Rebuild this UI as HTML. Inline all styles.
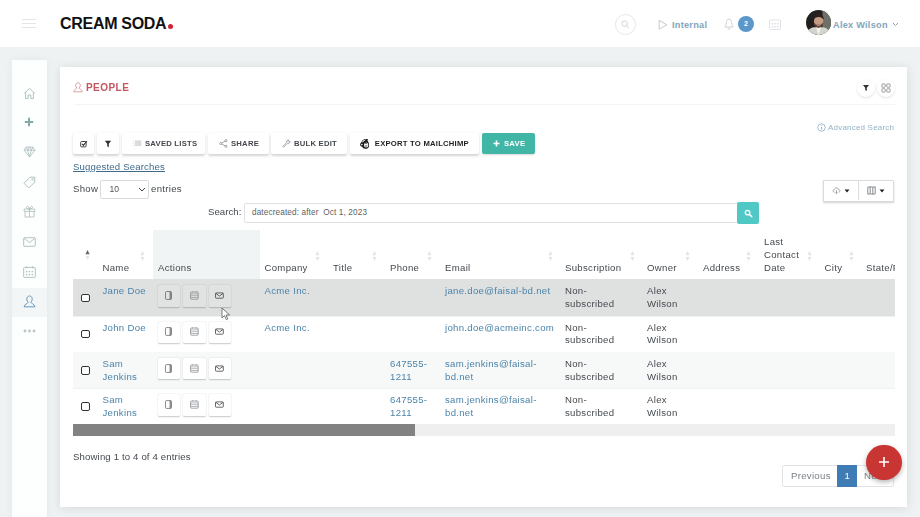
<!DOCTYPE html>
<html lang="en">
<head>
<meta charset="utf-8">
<title>Cream Soda - People</title>
<style>
*{box-sizing:border-box;margin:0;padding:0}
html,body{width:920px;height:517px;overflow:hidden}
body{transform:translateZ(0);background:#eff2f2;font-family:"Liberation Sans",sans-serif;color:#3a3f45;position:relative;font-size:10px}
.abs{position:absolute}
#hdr{position:absolute;left:0;top:0;width:920px;height:47px;background:#fff}
#logo{position:absolute;left:60px;top:13.7px;font-weight:bold;font-size:16px;line-height:20px;color:#111;letter-spacing:-0.3px;white-space:nowrap}
#logo i{display:inline-block;width:5px;height:5px;border-radius:50%;background:#d0213a;margin-left:1.6px}
.hm{position:absolute;left:22px;width:14px;height:1px;background:#e3e6e6}
.htxt{position:absolute;color:#84a5bc;font-size:9.2px;line-height:14px;font-weight:bold;white-space:nowrap;letter-spacing:0.25px}
#side{position:absolute;left:12px;top:60px;width:35px;height:460px;background:#fdfefe;box-shadow:0 0 9px rgba(0,0,0,0.05)}
#side .act{position:absolute;left:0;top:228px;width:35px;height:29px;background:#f2f6f6}
#panel{position:absolute;left:60px;top:67px;width:847px;height:440px;background:#fff;box-shadow:0 1px 10px rgba(0,0,0,0.10)}
#ttl{position:absolute;left:86px;top:80.6px;font-size:10px;line-height:14px;font-weight:bold;color:#c4565f;letter-spacing:0.45px}
#hr{position:absolute;left:75px;top:104px;width:820px;height:1px;background:#f3f5f5}
.btn{position:absolute;top:133px;height:21px;background:#fff;border-radius:2px;box-shadow:0 1.5px 2.5px rgba(0,0,0,0.17);font-size:7.7px;font-weight:bold;color:#44484d;line-height:21px;white-space:nowrap;letter-spacing:0.22px}
.btn span{position:absolute;top:0}
.cbtn{position:absolute;width:18px;height:18px;border-radius:50%;background:#fff;box-shadow:0 1px 2.5px rgba(0,0,0,0.12)}
.t{position:absolute;white-space:nowrap;font-size:9.6px;line-height:12.8px;letter-spacing:0.3px;color:#454a4f}
.lnk{color:#4b84aa}
.ab{position:absolute;width:22.6px;height:21.6px;background:#fff;border-radius:1.5px;box-shadow:0 0.5px 1.5px rgba(0,0,0,0.22)}
.cb{position:absolute;left:81px;width:8.5px;height:8.5px;border:1px solid #333;border-radius:2px;background:#fff}
</style>
</head>
<body>

<div id="hdr">
  <div class="hm" style="top:19px"></div><div class="hm" style="top:23px"></div><div class="hm" style="top:27px"></div>
  <div id="logo">CREAM SODA<i></i></div>
  <div class="abs" style="left:615px;top:13.6px;width:21px;height:21px;border:1px solid #e3e6e8;border-radius:50%"></div>
  <svg class="abs" style="left:620px;top:18.8px" width="11" height="11" viewBox="0 0 11 11"><circle cx="4.6" cy="4.6" r="2.8" fill="none" stroke="#d0d5d8" stroke-width="1"/><path d="M6.7 6.7L9 9" stroke="#d0d5d8" stroke-width="1"/></svg>
  <svg class="abs" style="left:658px;top:18.6px" width="10" height="11.5" viewBox="0 0 9 10"><path d="M1 1L8 5L1 9Z" fill="none" stroke="#c3c9cc" stroke-width="0.9" stroke-linejoin="round"/></svg>
  <div class="htxt" style="left:672px;top:17.5px">Internal</div>
  <svg class="abs" style="left:724px;top:18px" width="10" height="13" viewBox="0 0 10 13"><path d="M5 1.2C3 1.2 2.3 3 2.3 4.6C2.3 7 1.2 8.3 1 9H9C8.8 8.3 7.7 7 7.7 4.6C7.7 3 7 1.2 5 1.2Z" fill="none" stroke="#c6cccf" stroke-width="0.9"/><path d="M3.8 10.3C4 11.3 6 11.3 6.2 10.3" fill="none" stroke="#c6cccf" stroke-width="0.9"/></svg>
  <div class="abs" style="left:738px;top:15.6px;width:16px;height:16px;border-radius:50%;background:#5b97c9;color:#fff;font-size:7px;font-weight:bold;text-align:center;line-height:15px">2</div>
  <svg class="abs" style="left:769px;top:19px" width="12" height="11" viewBox="0 0 12 11"><rect x="0.5" y="1" width="11" height="9.5" rx="1" fill="none" stroke="#dce0e3" stroke-width="0.9"/><g fill="#dce0e3"><rect x="2.5" y="4" width="1.5" height="1.5"/><rect x="5.2" y="4" width="1.5" height="1.5"/><rect x="8" y="4" width="1.5" height="1.5"/><rect x="2.5" y="7" width="1.5" height="1.5"/><rect x="5.2" y="7" width="1.5" height="1.5"/><rect x="8" y="7" width="1.5" height="1.5"/></g></svg>
  <svg class="abs" style="left:805.5px;top:10.4px" width="25" height="25" viewBox="0 0 25 25"><defs><clipPath id="av"><circle cx="12.5" cy="12.5" r="12.5"/></clipPath><filter id="bl" x="-10%" y="-10%" width="120%" height="120%"><feGaussianBlur stdDeviation="0.7"/></filter></defs><g clip-path="url(#av)"><rect width="25" height="25" fill="#211f1f"/><g filter="url(#bl)"><rect x="16.5" y="0" width="9" height="25" fill="#6e7169"/><path d="M0 25C1 20 4 18 8 17.2L17 17.2C21 18 24 20 25 25Z" fill="#d4d4ce"/><path d="M10.2 17.5L12.6 25L15 17.5Z" fill="#f6f4ee"/><ellipse cx="12.6" cy="11.6" rx="4.7" ry="6" fill="#c69c86"/><path d="M7.6 9.5C6.6 2.6 18.6 2.6 17.6 9.5C16 6 9.2 6 7.6 9.5Z" fill="#2f211b"/><path d="M7.9 12C8.2 19.6 17 19.6 17.3 12C16.4 15.4 8.8 15.4 7.9 12Z" fill="#674434"/><path d="M10.6 14.6C11.8 15.6 13.4 15.6 14.6 14.6" stroke="#e8d8cc" stroke-width="0.7" fill="none"/></g></g></svg>
  <div class="htxt" style="left:833px;top:17.5px">Alex Wilson</div>
  <svg class="abs" style="left:892px;top:22px" width="7" height="5" viewBox="0 0 7 5"><path d="M1 1L3.5 3.5L6 1" fill="none" stroke="#8aa3b5" stroke-width="1"/></svg>
</div>


<div id="side"><div class="act"></div></div>
<div id="panel"></div>
<svg class="abs" style="left:23px;top:87px" width="13" height="13" viewBox="0 0 13 13"><path d="M1.2 6.4L6.5 1.4L11.8 6.4M2.6 5.4V11.6H5.2V8H7.8V11.6H10.4V5.4" fill="none" stroke="#a9bcbc" stroke-width="0.9" stroke-linejoin="round"/></svg>
<svg class="abs" style="left:24px;top:117px" width="10" height="10" viewBox="0 0 10 10"><path d="M5 0.8V9.2M0.8 5H9.2" stroke="#86aaa6" stroke-width="2"/></svg>
<svg class="abs" style="left:23px;top:146px" width="13" height="12" viewBox="0 0 13 12"><path d="M3.2 1H9.8L12 4.2L6.5 11L1 4.2ZM1 4.2H12M4.6 4.2L6.5 11L8.4 4.2M3.2 1L4.6 4.2L6.5 1L8.4 4.2L9.8 1" fill="none" stroke="#a9bcbc" stroke-width="0.8" stroke-linejoin="round"/></svg>
<svg class="abs" style="left:23px;top:176px" width="13" height="13" viewBox="0 0 13 13"><path d="M7 1.2H11.8V6L5.8 12L1 7.2Z" fill="none" stroke="#a9bcbc" stroke-width="0.9" stroke-linejoin="round"/><circle cx="9.6" cy="3.4" r="0.9" fill="none" stroke="#a9bcbc" stroke-width="0.7"/></svg>
<svg class="abs" style="left:23px;top:205px" width="13" height="13" viewBox="0 0 13 13"><path d="M1.2 4H11.8V6.4H1.2ZM2 6.4V12H11V6.4M6.5 4V12M6.5 4C4.5 4 3 3 3.6 1.8C4.4 0.6 6.2 2 6.5 4C6.8 2 8.6 0.6 9.4 1.8C10 3 8.5 4 6.5 4" fill="none" stroke="#a9bcbc" stroke-width="0.8" stroke-linejoin="round"/></svg>
<svg class="abs" style="left:23px;top:237px" width="13" height="10" viewBox="0 0 13 10"><rect x="0.7" y="0.7" width="11.6" height="8.6" rx="0.8" fill="none" stroke="#a9bcbc" stroke-width="0.9"/><path d="M1 1.2L6.5 5.6L12 1.2" fill="none" stroke="#a9bcbc" stroke-width="0.9"/></svg>
<svg class="abs" style="left:23px;top:266px" width="13" height="12" viewBox="0 0 13 12"><rect x="0.7" y="1.4" width="11.6" height="10" rx="0.8" fill="none" stroke="#a9bcbc" stroke-width="0.9"/><path d="M3.4 0.4V2.4M9.6 0.4V2.4" stroke="#a9bcbc" stroke-width="0.9"/><g fill="#a9bcbc"><rect x="3" y="5" width="1.3" height="1.3"/><rect x="5.8" y="5" width="1.3" height="1.3"/><rect x="8.6" y="5" width="1.3" height="1.3"/><rect x="3" y="8" width="1.3" height="1.3"/><rect x="5.8" y="8" width="1.3" height="1.3"/><rect x="8.6" y="8" width="1.3" height="1.3"/></g></svg>
<svg class="abs" style="left:23px;top:295px" width="13" height="13" viewBox="0 0 13 13"><path d="M6.5 1C4.6 1 3.8 2.5 3.8 4C3.8 5.5 4.5 6.7 5.3 7.3C5.1 8.3 1.5 8.8 1.1 11.8H11.9C11.5 8.8 7.9 8.3 7.7 7.3C8.5 6.7 9.2 5.5 9.2 4C9.2 2.5 8.4 1 6.5 1Z" fill="none" stroke="#5b90b8" stroke-width="0.9" stroke-linejoin="round"/></svg>
<svg class="abs" style="left:23px;top:329px" width="13" height="4" viewBox="0 0 13 4"><g fill="#b9c6c6"><circle cx="2" cy="2" r="1.4"/><circle cx="6.5" cy="2" r="1.4"/><circle cx="11" cy="2" r="1.4"/></g></svg>
<div id="ttl">PEOPLE</div>
<div id="hr"></div>

<!-- title icon -->
<svg class="abs" style="left:73px;top:82px" width="10" height="11" viewBox="0 0 10 11"><path d="M5 0.8C3.4 0.8 2.7 2 2.7 3.3C2.7 4.6 3.3 5.6 4 6.1C3.8 6.9 1 7.4 0.7 9.8H9.3C9 7.4 6.2 6.9 6 6.1C6.7 5.6 7.3 4.6 7.3 3.3C7.3 2 6.6 0.8 5 0.8Z" fill="none" stroke="#d58a91" stroke-width="0.8"/></svg>

<!-- top-right circular buttons -->
<div class="cbtn" style="left:857px;top:79px"></div>
<svg class="abs" style="left:862px;top:84px" width="8" height="8" viewBox="0 0 8 8"><path d="M1 1H7L4.8 3.8V7L3.2 6V3.8Z" fill="#2e3236"/></svg>
<div class="cbtn" style="left:877px;top:79px"></div>
<svg class="abs" style="left:881px;top:83px" width="10" height="10" viewBox="0 0 10 10"><g fill="none" stroke="#74797d" stroke-width="0.7"><rect x="0.9" y="0.9" width="3.3" height="3.3" rx="0.5"/><rect x="5.8" y="0.9" width="3.3" height="3.3" rx="0.5"/><rect x="0.9" y="5.8" width="3.3" height="3.3" rx="0.5"/><rect x="5.8" y="5.8" width="3.3" height="3.3" rx="0.5"/></g></svg>

<!-- advanced search -->
<svg class="abs" style="left:817px;top:123px" width="9" height="9" viewBox="0 0 9 9"><circle cx="4.5" cy="4.5" r="3.7" fill="none" stroke="#8fb0c4" stroke-width="0.8"/><path d="M4.5 2.3V2.9M4.5 3.8V6.6" stroke="#8fb0c4" stroke-width="0.9"/></svg>
<div class="t" style="left:828px;top:122px;font-size:8px;line-height:12px;letter-spacing:0.2px;color:#93b2c5">Advanced Search</div>

<!-- toolbar -->
<div class="btn" style="left:73px;width:21px"><svg class="abs" style="left:7px;top:6.5px" width="8" height="8" viewBox="0 0 8 8"><rect x="0.7" y="1.5" width="5.4" height="5.4" rx="0.9" fill="none" stroke="#2f3337" stroke-width="0.9"/><path d="M2.1 3.9L3.4 5.3L7 1" fill="none" stroke="#2f3337" stroke-width="1.1"/></svg></div>
<div class="btn" style="left:97px;width:22px"><svg class="abs" style="left:7px;top:7px" width="8" height="8" viewBox="0 0 8 8"><path d="M0.8 0.8H7.2L4.8 3.8V7.2L3.2 6.2V3.8Z" fill="#2e3236"/></svg></div>
<div class="btn" style="left:122px;width:83px"><svg class="abs" style="left:11px;top:7px" width="9" height="7" viewBox="0 0 9 7"><g fill="#d9dcde"><rect x="0" y="0.6" width="0.9" height="0.9"/><rect x="0" y="2.8" width="0.9" height="0.9"/><rect x="0" y="5" width="0.9" height="0.9"/><rect x="1.8" y="0.4" width="6.4" height="5.7"/></g></svg><span style="left:23px">SAVED LISTS</span></div>
<div class="btn" style="left:208px;width:61px"><svg class="abs" style="left:11px;top:6px" width="9" height="9" viewBox="0 0 9 9"><g fill="none" stroke="#8d9296" stroke-width="0.8"><circle cx="7" cy="1.7" r="1.1"/><circle cx="1.8" cy="4.5" r="1.1"/><circle cx="7" cy="7.3" r="1.1"/><path d="M2.8 4L6 2.2M2.8 5L6 6.8"/></g></svg><span style="left:23px">SHARE</span></div>
<div class="btn" style="left:271px;width:76px"><svg class="abs" style="left:11px;top:6px" width="9" height="9" viewBox="0 0 9 9"><path d="M1 7.2L4.4 3.8C3.9 2.2 5.2 0.7 7 1L5.7 2.3L6.7 3.3L8 2C8.4 3.8 6.8 5.1 5.2 4.6L1.8 8C1.4 8.4 0.6 7.6 1 7.2Z" fill="none" stroke="#8d9296" stroke-width="0.75" stroke-linejoin="round"/></svg><span style="left:23px">BULK EDIT</span></div>
<div class="btn" style="left:350px;width:129px;color:#1d2023"><svg class="abs" style="left:9.3px;top:5px" width="11.5" height="11.5" viewBox="0 0 11 11.5"><path d="M2.2 4.2C3 1.6 6 0.4 8.6 1.2C8.8 1.9 8.4 2.4 8 2.6C9.6 4 10 6.4 9.8 8C9.6 10 7.8 11 6 10.8C4.6 10.7 3.4 10 3 8.8C1.6 8.8 0.6 7.6 0.9 6.3C1 5.4 1.5 4.6 2.2 4.2Z" fill="#17191b"/><ellipse cx="6.9" cy="7" rx="2.2" ry="2.6" fill="#fff"/><path d="M2.9 3.9C3.6 2.4 5.4 1.6 7 1.8C5.6 2.4 4.2 3.4 3.6 4.6Z" fill="#fff"/><circle cx="2.6" cy="6.6" r="0.8" fill="#fff"/><path d="M5.6 5.6C6.4 5.2 7.4 5.3 8 5.8" fill="none" stroke="#17191b" stroke-width="0.6"/><path d="M5.8 7.4H8M6 8.4C6.6 8.9 7.4 8.9 7.9 8.4" fill="none" stroke="#17191b" stroke-width="0.5"/></svg><span style="left:24.8px">EXPORT TO MAILCHIMP</span></div>
<div class="btn" style="left:482px;width:53px;background:#41b6a6;color:#fff;box-shadow:0 1px 2px rgba(0,0,0,0.15)"><svg class="abs" style="left:11px;top:7px" width="7" height="7" viewBox="0 0 7 7"><path d="M3.5 0.5V6.5M0.5 3.5H6.5" stroke="#fff" stroke-width="1.6"/></svg><span style="left:22px">SAVE</span></div>

<!-- suggested / show -->
<div class="t" style="left:73px;top:161px;letter-spacing:0.16px;color:#3f6b8c;text-decoration:underline">Suggested Searches</div>
<div class="t" style="left:73px;top:182.5px">Show</div>
<div class="abs" style="left:100px;top:180px;width:49px;height:19px;border:1px solid #d9dcdd;border-radius:2px;background:#fff"></div>
<div class="t" style="left:109.5px;top:183.3px;font-size:8.6px;letter-spacing:0;color:#555">10</div>
<svg class="abs" style="left:138px;top:187px" width="8" height="5" viewBox="0 0 8 5"><path d="M1 1L4 4L7 1" fill="none" stroke="#444" stroke-width="1"/></svg>
<div class="t" style="left:151px;top:182.5px">entries</div>

<!-- right dropdown buttons -->
<div class="abs" style="left:823px;top:180px;width:71px;height:21.5px;background:#fff;border-radius:1px;border:1px solid #d9dbdc;box-shadow:0 1px 2px rgba(0,0,0,0.18)"></div>
<div class="abs" style="left:858px;top:181px;width:1px;height:19px;background:#dcdfe1"></div>
<svg class="abs" style="left:832px;top:186px" width="9" height="9" viewBox="0 0 9 9"><path d="M2.6 6.2C0.6 6.2 0.6 3.6 2.4 3.6C2.6 1.4 6.2 1.4 6.4 3.4C8.4 3.4 8.4 6.2 6.6 6.2" fill="none" stroke="#8d9296" stroke-width="0.8"/><path d="M4.5 4.2V7.6M3.4 6.6L4.5 7.7L5.6 6.6" fill="none" stroke="#8d9296" stroke-width="0.8"/></svg>
<svg class="abs" style="left:844px;top:189px" width="6" height="4" viewBox="0 0 6 4"><path d="M0.5 0.5H5.5L3 3.5Z" fill="#222"/></svg>
<svg class="abs" style="left:867px;top:186px" width="9" height="9" viewBox="0 0 9 9"><path d="M0.8 1.2L3.2 0.8L5.8 1.2L8.2 0.8V7.8L5.8 8.2L3.2 7.8L0.8 8.2ZM3.2 0.8V7.8M5.8 1.2V8.2" fill="none" stroke="#6b7074" stroke-width="0.8"/></svg>
<svg class="abs" style="left:879px;top:189px" width="6" height="4" viewBox="0 0 6 4"><path d="M0.5 0.5H5.5L3 3.5Z" fill="#222"/></svg>

<!-- search -->
<div class="t" style="left:208px;top:206px;letter-spacing:0.05px">Search:</div>
<div class="abs" style="left:244px;top:203px;width:494px;height:20px;border:1px solid #dfe1e2;border-radius:2px 0 0 2px;background:#fff"></div>
<div class="t" style="left:252px;top:207px;font-size:8.2px;letter-spacing:0.13px;color:#5a5f64">datecreated: after &nbsp;Oct 1, 2023</div>
<div class="abs" style="left:737px;top:202px;width:22px;height:22px;background:#50c8c5;border-radius:2px"></div>
<svg class="abs" style="left:744px;top:209px" width="9" height="9" viewBox="0 0 9 9"><circle cx="3.6" cy="3.6" r="2.3" fill="none" stroke="#fff" stroke-width="1.3"/><path d="M5.4 5.4L7.8 7.8" stroke="#fff" stroke-width="1.5" stroke-linecap="round"/></svg>


<!-- table -->
<div class="abs" style="left:153px;top:230px;width:107px;height:49.30000000000001px;background:#f1f4f4"></div>
<div class="abs" style="left:73px;top:279.3px;width:822px;height:36.25px;background:#dfe1e1"></div>
<div class="abs" style="left:73px;top:315.55px;width:822px;height:1px;background:#f0f1f1"></div>
<div class="abs" style="left:73px;top:351.8px;width:822px;height:36.25px;background:#f7f8f8"></div>
<div class="abs" style="left:73px;top:388.05px;width:822px;height:1px;background:#f0f1f1"></div>
<div class="t" style="left:102.5px;top:261.57px">Name</div>
<div class="t" style="left:158px;top:261.57px">Actions</div>
<div class="t" style="left:264.5px;top:261.57px">Company</div>
<div class="t" style="left:333px;top:261.57px">Title</div>
<div class="t" style="left:390px;top:261.57px">Phone</div>
<div class="t" style="left:445px;top:261.57px">Email</div>
<div class="t" style="left:565px;top:261.57px">Subscription</div>
<div class="t" style="left:647px;top:261.57px">Owner</div>
<div class="t" style="left:703px;top:261.57px">Address</div>
<div class="t" style="left:824.5px;top:261.57px">City</div>
<div class="t" style="left:764px;top:235.97px">Last<br>Contact<br>Date</div>
<div class="abs" style="left:866px;top:261.57px;width:29px;height:12.8px;overflow:hidden"><div class="t" style="left:0;top:0">State/Province</div></div>
<svg class="abs" style="left:85px;top:249.3px" width="5" height="12" viewBox="0 0 5 12"><path d="M2.5 1L4.6 5.2H0.4Z" fill="#63676a"/><path d="M2.5 11L4.4 7H0.6Z" fill="#e4e6e6"/></svg>
<svg class="abs" style="left:140.2px;top:249.6px" width="5" height="12" viewBox="0 0 5 12"><path d="M2.5 1L4.6 5.2H0.4Z" fill="#e2e5e5"/><path d="M2.5 11L4.4 7H0.6Z" fill="#e2e5e5"/></svg>
<svg class="abs" style="left:315px;top:249.6px" width="5" height="12" viewBox="0 0 5 12"><path d="M2.5 1L4.6 5.2H0.4Z" fill="#e2e5e5"/><path d="M2.5 11L4.4 7H0.6Z" fill="#e2e5e5"/></svg>
<svg class="abs" style="left:372px;top:249.6px" width="5" height="12" viewBox="0 0 5 12"><path d="M2.5 1L4.6 5.2H0.4Z" fill="#e2e5e5"/><path d="M2.5 11L4.4 7H0.6Z" fill="#e2e5e5"/></svg>
<svg class="abs" style="left:427px;top:249.6px" width="5" height="12" viewBox="0 0 5 12"><path d="M2.5 1L4.6 5.2H0.4Z" fill="#e2e5e5"/><path d="M2.5 11L4.4 7H0.6Z" fill="#e2e5e5"/></svg>
<svg class="abs" style="left:547.5px;top:249.6px" width="5" height="12" viewBox="0 0 5 12"><path d="M2.5 1L4.6 5.2H0.4Z" fill="#e2e5e5"/><path d="M2.5 11L4.4 7H0.6Z" fill="#e2e5e5"/></svg>
<svg class="abs" style="left:629.5px;top:249.6px" width="5" height="12" viewBox="0 0 5 12"><path d="M2.5 1L4.6 5.2H0.4Z" fill="#e2e5e5"/><path d="M2.5 11L4.4 7H0.6Z" fill="#e2e5e5"/></svg>
<svg class="abs" style="left:684.5px;top:249.6px" width="5" height="12" viewBox="0 0 5 12"><path d="M2.5 1L4.6 5.2H0.4Z" fill="#e2e5e5"/><path d="M2.5 11L4.4 7H0.6Z" fill="#e2e5e5"/></svg>
<svg class="abs" style="left:745.5px;top:249.6px" width="5" height="12" viewBox="0 0 5 12"><path d="M2.5 1L4.6 5.2H0.4Z" fill="#e2e5e5"/><path d="M2.5 11L4.4 7H0.6Z" fill="#e2e5e5"/></svg>
<svg class="abs" style="left:806.5px;top:249.6px" width="5" height="12" viewBox="0 0 5 12"><path d="M2.5 1L4.6 5.2H0.4Z" fill="#e2e5e5"/><path d="M2.5 11L4.4 7H0.6Z" fill="#e2e5e5"/></svg>
<svg class="abs" style="left:848.5px;top:249.6px" width="5" height="12" viewBox="0 0 5 12"><path d="M2.5 1L4.6 5.2H0.4Z" fill="#e2e5e5"/><path d="M2.5 11L4.4 7H0.6Z" fill="#e2e5e5"/></svg>
<div class="cb" style="top:293.60px"></div>
<div class="t lnk" style="left:102.5px;top:285.37px">Jane Doe</div>
<div class="ab" style="left:157.5px;top:285.40px;background:#e1e3e3"><svg class="abs" style="left:5.9px;top:4.8px" width="11" height="11" viewBox="0 0 11 11"><rect x="2.5" y="1.6" width="6" height="7.8" rx="0.9" fill="none" stroke="#55595d" stroke-width="0.7"/><path d="M7.2 1.6V9.4" stroke="#55595d" stroke-width="1"/></svg></div>
<div class="ab" style="left:183px;top:285.40px;background:#e1e3e3"><svg class="abs" style="left:5.9px;top:4.8px" width="11" height="11" viewBox="0 0 11 11"><rect x="1.6" y="2" width="7.6" height="7.2" rx="0.8" fill="none" stroke="#7d8185" stroke-width="0.7"/><path d="M1.6 3.9H9.2M1.6 5.7H9.2M1.6 7.5H9.2M3.6 1.3V2.6M7.2 1.3V2.6" stroke="#8b8f93" stroke-width="0.6"/></svg></div>
<div class="ab" style="left:208.5px;top:285.40px;background:#e1e3e3"><svg class="abs" style="left:5.9px;top:4.8px" width="11" height="11" viewBox="0 0 11 11"><rect x="1.5" y="2.9" width="7.8" height="5.3" rx="0.7" fill="none" stroke="#3f4347" stroke-width="0.8"/><path d="M1.8 3.4L5.4 6L9 3.4" fill="none" stroke="#3f4347" stroke-width="0.8"/></svg></div>
<div class="t lnk" style="left:264.5px;top:285.37px">Acme Inc.</div>
<div class="t lnk" style="left:445px;top:285.37px">jane.doe@faisal-bd.net</div>
<div class="t" style="left:565px;top:285.37px">Non-<br>subscribed</div>
<div class="t" style="left:647px;top:285.37px">Alex<br>Wilson</div>
<div class="cb" style="top:329.85px"></div>
<div class="t lnk" style="left:102.5px;top:321.62px">John Doe</div>
<div class="ab" style="left:157.5px;top:321.65px;background:#fff"><svg class="abs" style="left:5.9px;top:4.8px" width="11" height="11" viewBox="0 0 11 11"><rect x="2.5" y="1.6" width="6" height="7.8" rx="0.9" fill="none" stroke="#55595d" stroke-width="0.7"/><path d="M7.2 1.6V9.4" stroke="#55595d" stroke-width="1"/></svg></div>
<div class="ab" style="left:183px;top:321.65px;background:#fff"><svg class="abs" style="left:5.9px;top:4.8px" width="11" height="11" viewBox="0 0 11 11"><rect x="1.6" y="2" width="7.6" height="7.2" rx="0.8" fill="none" stroke="#7d8185" stroke-width="0.7"/><path d="M1.6 3.9H9.2M1.6 5.7H9.2M1.6 7.5H9.2M3.6 1.3V2.6M7.2 1.3V2.6" stroke="#8b8f93" stroke-width="0.6"/></svg></div>
<div class="ab" style="left:208.5px;top:321.65px;background:#fff"><svg class="abs" style="left:5.9px;top:4.8px" width="11" height="11" viewBox="0 0 11 11"><rect x="1.5" y="2.9" width="7.8" height="5.3" rx="0.7" fill="none" stroke="#3f4347" stroke-width="0.8"/><path d="M1.8 3.4L5.4 6L9 3.4" fill="none" stroke="#3f4347" stroke-width="0.8"/></svg></div>
<div class="t lnk" style="left:264.5px;top:321.62px">Acme Inc.</div>
<div class="t lnk" style="left:445px;top:321.62px">john.doe@acmeinc.com</div>
<div class="t" style="left:565px;top:321.62px">Non-<br>subscribed</div>
<div class="t" style="left:647px;top:321.62px">Alex<br>Wilson</div>
<div class="cb" style="top:366.10px"></div>
<div class="t lnk" style="left:102.5px;top:357.87px">Sam<br>Jenkins</div>
<div class="ab" style="left:157.5px;top:357.90px;background:#fff"><svg class="abs" style="left:5.9px;top:4.8px" width="11" height="11" viewBox="0 0 11 11"><rect x="2.5" y="1.6" width="6" height="7.8" rx="0.9" fill="none" stroke="#55595d" stroke-width="0.7"/><path d="M7.2 1.6V9.4" stroke="#55595d" stroke-width="1"/></svg></div>
<div class="ab" style="left:183px;top:357.90px;background:#fff"><svg class="abs" style="left:5.9px;top:4.8px" width="11" height="11" viewBox="0 0 11 11"><rect x="1.6" y="2" width="7.6" height="7.2" rx="0.8" fill="none" stroke="#7d8185" stroke-width="0.7"/><path d="M1.6 3.9H9.2M1.6 5.7H9.2M1.6 7.5H9.2M3.6 1.3V2.6M7.2 1.3V2.6" stroke="#8b8f93" stroke-width="0.6"/></svg></div>
<div class="ab" style="left:208.5px;top:357.90px;background:#fff"><svg class="abs" style="left:5.9px;top:4.8px" width="11" height="11" viewBox="0 0 11 11"><rect x="1.5" y="2.9" width="7.8" height="5.3" rx="0.7" fill="none" stroke="#3f4347" stroke-width="0.8"/><path d="M1.8 3.4L5.4 6L9 3.4" fill="none" stroke="#3f4347" stroke-width="0.8"/></svg></div>
<div class="t lnk" style="left:390px;top:357.87px">647555-<br>1211</div>
<div class="t lnk" style="left:445px;top:357.87px">sam.jenkins@faisal-<br>bd.net</div>
<div class="t" style="left:565px;top:357.87px">Non-<br>subscribed</div>
<div class="t" style="left:647px;top:357.87px">Alex<br>Wilson</div>
<div class="cb" style="top:402.35px"></div>
<div class="t lnk" style="left:102.5px;top:394.12px">Sam<br>Jenkins</div>
<div class="ab" style="left:157.5px;top:394.15px;background:#fff"><svg class="abs" style="left:5.9px;top:4.8px" width="11" height="11" viewBox="0 0 11 11"><rect x="2.5" y="1.6" width="6" height="7.8" rx="0.9" fill="none" stroke="#55595d" stroke-width="0.7"/><path d="M7.2 1.6V9.4" stroke="#55595d" stroke-width="1"/></svg></div>
<div class="ab" style="left:183px;top:394.15px;background:#fff"><svg class="abs" style="left:5.9px;top:4.8px" width="11" height="11" viewBox="0 0 11 11"><rect x="1.6" y="2" width="7.6" height="7.2" rx="0.8" fill="none" stroke="#7d8185" stroke-width="0.7"/><path d="M1.6 3.9H9.2M1.6 5.7H9.2M1.6 7.5H9.2M3.6 1.3V2.6M7.2 1.3V2.6" stroke="#8b8f93" stroke-width="0.6"/></svg></div>
<div class="ab" style="left:208.5px;top:394.15px;background:#fff"><svg class="abs" style="left:5.9px;top:4.8px" width="11" height="11" viewBox="0 0 11 11"><rect x="1.5" y="2.9" width="7.8" height="5.3" rx="0.7" fill="none" stroke="#3f4347" stroke-width="0.8"/><path d="M1.8 3.4L5.4 6L9 3.4" fill="none" stroke="#3f4347" stroke-width="0.8"/></svg></div>
<div class="t lnk" style="left:390px;top:394.12px">647555-<br>1211</div>
<div class="t lnk" style="left:445px;top:394.12px">sam.jenkins@faisal-<br>bd.net</div>
<div class="t" style="left:565px;top:394.12px">Non-<br>subscribed</div>
<div class="t" style="left:647px;top:394.12px">Alex<br>Wilson</div>
<div class="abs" style="left:73px;top:424.3px;width:822px;height:11.5px;background:#efefef"></div>
<div class="abs" style="left:73px;top:424.3px;width:342px;height:11.5px;background:#828282"></div>
<div class="t" style="left:73px;top:451px;letter-spacing:0.15px">Showing 1 to 4 of 4 entries</div>
<div class="abs" style="left:782px;top:465px;width:112px;height:22px;border:1px solid #e1e4e6;border-radius:2px;background:#fff"></div>
<div class="t" style="left:791px;top:469.5px;color:#7d8286">Previous</div>
<div class="abs" style="left:837px;top:465px;width:20px;height:22px;background:#3f7cb5"></div>
<div class="t" style="left:844.5px;top:469.5px;color:#fff">1</div>
<div class="t" style="left:864px;top:469.5px;color:#7d8286">Next</div>
<div class="abs" style="left:866px;top:444.5px;width:35.5px;height:35.5px;border-radius:50%;background:#c93533;box-shadow:0 2px 5px rgba(0,0,0,0.3)"></div>
<svg class="abs" style="left:878px;top:456px" width="12" height="12" viewBox="0 0 12 12"><path d="M6 1V11M1 6H11" stroke="#fff" stroke-width="1.6"/></svg>
<svg class="abs" style="left:221.4px;top:307px" width="11" height="15" viewBox="0 0 11 15"><path d="M1 1V10.8L3.5 8.6L5.3 12.6L6.8 11.9L5 8H8.6Z" fill="#fff" stroke="#606366" stroke-width="0.85" stroke-linejoin="round"/></svg>
</body>
</html>
